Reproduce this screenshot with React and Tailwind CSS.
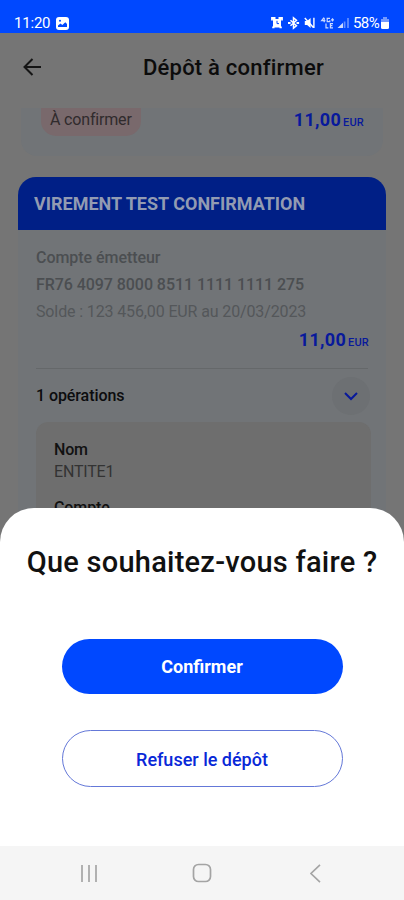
function StatusIcons() {
  return (
    <svg className="block" width="80" height="14" viewBox="0 0 80 14" fill="none" stroke="#fff" strokeWidth="1.3">
      {/* alarm */}
      <path d="M2 3h8v8.500H2z" fill="#fff" stroke="none" />
      <path d="M1 4.500V2h3.500M11 4.500V2H7.500M1.200 11.400h2.300M10.800 11.400H8.500" strokeWidth="1.8" />
      <path d="M6 4.800v2.800h2" stroke="#0048ff" strokeWidth="1" />
      {/* bluetooth */}
      <path d="m19.500 4.200 6 5.600-3 2.400V1.800l3 2.400-6 5.600" strokeWidth="1.5" />
      <path d="M17 7h2.600M25.500 7h2.600" strokeWidth="1.8" />
      {/* muted */}
      <path d="M33.800 5h2.300l3.500-3v10l-3.500-3h-2.300z" fill="#fff" stroke="none" />
      <path d="m33.800 2 8.600 9.500M42.900 1.800V12" strokeWidth="1.4" />
      {/* network */}
      <g opacity=".8" strokeWidth="1.2">
        <path d="M53 1.500 50.600 4.600h3.800M53.200 2v4.200M59 2.400h-2.800v3.200h2.600V4.200M60 3.800h3M61.500 2.200v3.200M55 7.500v4.400h2.400M62 7.600h-2.600v4.300H62M59.400 9.700h2" />
      </g>
      {/* signal */}
      <path d="M66.500 12h5.500V6.800z" fill="#fff" stroke="none" opacity=".8" />
      <path d="M73.600 5.500V12M77 2v10" opacity=".4" strokeWidth="1.7" />
    </svg>
  );
}

function Amount({ className }) {
  return (
    <div className={"flex items-baseline justify-end text-[#08199b] " + className}>
      <span className="text-[18px] font-bold tracking-[0.3px]">11,00</span>
      <span className="ml-[2px] text-[11px] font-medium tracking-[0.2px]">EUR</span>
    </div>
  );
}

export default function App() {
  return (
    <div className="relative flex h-[900px] w-[404px] flex-col overflow-hidden bg-[#757575] font-[Roboto,sans-serif] whitespace-nowrap">
      <div className="flex h-[33px] shrink-0 items-start bg-[#0048ff] pt-[15px] pl-[14px] text-white">
        <span className="w-[42px] text-[15px] leading-[17px] tracking-[-0.2px]">11:20</span>
        <svg className="mt-[2px] block" width="13" height="13" viewBox="0 0 13 13">
          <rect width="13" height="13" rx="3" fill="#fff" />
          <circle cx="4" cy="3.8" r="1" fill="#0048ff" />
          <path d="M2 10V8.4l2.5-1.8L6.3 8l3-2.8L11 7v3z" fill="#0048ff" />
        </svg>
        <div className="mt-[1px] ml-[202px] w-[83px]"><StatusIcons /></div>
        <span className="-ml-px w-[28px] text-[15px] leading-[17px] tracking-[-0.6px]">58%</span>
        <svg className="mt-[2px] block" width="8" height="12" viewBox="0 0 8 12">
          <path d="M2 0h4v2h2v3H0V2h2z" fill="#fff" opacity=".45" />
          <path d="M0 5h8v5.500Q8 12 6.500 12h-5Q0 12 0 10.500z" fill="#fff" />
        </svg>
      </div>

      <div className="flex h-[75px] shrink-0 items-center pb-[5px] pl-[23px]">
        <svg className="-mt-[2px] block" width="19" height="18" viewBox="0 0 19 18" fill="none" stroke="#151515" strokeWidth="2">
          <path d="M9.500 1 1.500 9l8 8M1.500 9H18" />
        </svg>
        <h1 className="ml-[101px] text-[22px] leading-[32px] font-medium tracking-[0.22px] text-[#0c0c0c]">Dépôt à confirmer</h1>
      </div>

      <main className="flex min-h-0 flex-1 flex-col overflow-hidden px-[18px]">
        <div className="mx-[3px] flex h-[48px] shrink-0 items-start justify-between rounded-b-[16px] bg-[#717477] pr-[19px] pl-[20px]">
          <div className="h-[28px] w-[100px] rounded-b-[15px] bg-[#79696c] pl-[9px] text-[16px] leading-[23px] tracking-[-0.17px] text-[#302b2d]">À confirmer</div>
          <Amount className="leading-[23px]" />
        </div>

        <section className="mt-[21px] w-[368px] shrink-0 overflow-hidden rounded-t-[18px] bg-[#717477]">
          <h2 className="h-[53px] bg-[#001f86] pl-[16px] text-[18px] leading-[53px] font-bold text-[#929bb2]">VIREMENT TEST CONFIRMATION</h2>
          <div className="px-[18px] pt-[14px]">
            <div className="text-[16px] leading-[27px] font-medium tracking-[-0.05px] text-[#4b4e51]">Compte émetteur</div>
            <div className="text-[16px] leading-[27px] font-medium tracking-[-0.06px] text-[#4b4e51]">FR76 4097 8000 8511 1111 1111 275</div>
            <div className="text-[16px] leading-[27px] tracking-[-0.13px] text-[#54575a]">Solde : 123 456,00 EUR au 20/03/2023</div>
            <Amount className="-mr-px h-[43px] leading-[30px]" />
            <div className="flex h-[54px] items-center justify-between border-t border-[#65686a]">
              <span className="text-[16px] font-medium tracking-[-0.08px] text-[#0c0c0e]">1 opérations</span>
              <span className="-mr-[2px] flex h-[38px] w-[38px] items-center justify-center rounded-full bg-[#6d7073]">
                <svg className="mt-px" width="14" height="9" viewBox="0 0 14 9" fill="none" stroke="#08199b" strokeWidth="2"><path d="m1 1 6 6 6-6" /></svg>
              </span>
            </div>
            <div className="-mr-[3px] h-[140px] rounded-t-[12px] bg-[#6e6e6e] pt-[17px] pl-[18px] text-[16px] leading-[22px] text-[#333]">
              <div className="font-medium tracking-[-0.2px] text-[#111]">Nom</div>
              <div className="tracking-[-0.2px]">ENTITE1</div>
              <div className="mt-[14px] font-medium tracking-[-0.1px] text-[#111]">Compte</div>
            </div>
          </div>
        </section>
      </main>

      <div className="absolute inset-x-0 top-[508px] flex h-[339px] flex-col items-center rounded-t-[34px] bg-white">
        <h3 className="mt-[36px] text-[29px] leading-[36px] font-medium tracking-[0.25px] text-[#111]">Que souhaitez-vous faire ?</h3>
        <button className="mt-[59px] h-[55px] w-[281px] rounded-full bg-[#0048ff] text-[18px] font-bold text-white">Confirmer</button>
        <button className="mt-[36px] h-[57px] w-[281px] rounded-full border border-[#6478d8] pt-px text-[18px] font-medium text-[#0828d8]">Refuser le dépôt</button>
      </div>

      <nav className="absolute inset-x-0 bottom-0 flex h-[54px] items-center bg-[#f5f5f5] pl-[80px]">
        <svg className="block" width="18" height="17" viewBox="0 0 18 17" stroke="#aaa" strokeWidth="1.8"><path d="M2 0v17M9 0v17M16 0v17" /></svg>
        <svg className="ml-[94px] block" width="20" height="20" viewBox="0 0 20 20" fill="none" stroke="#a4a4a4" strokeWidth="1.7"><rect x="1.500" y="1.500" width="17" height="17" rx="5" /></svg>
        <svg className="ml-[98px] block" width="11" height="19" viewBox="0 0 11 19" fill="none" stroke="#a4a4a4" strokeWidth="1.6"><path d="m10 .8-9 8.700 9 8.700" /></svg>
      </nav>
    </div>
  );
}
